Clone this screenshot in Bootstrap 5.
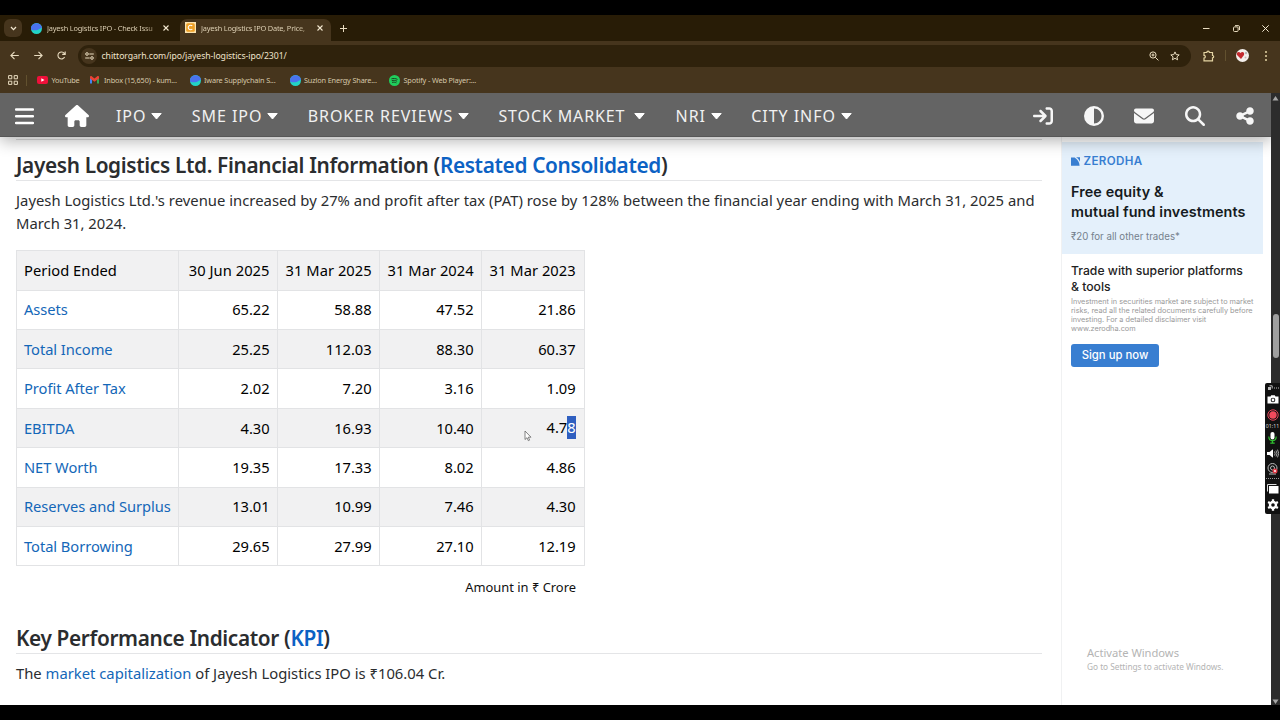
<!DOCTYPE html>
<html lang="en">
<head>
<meta charset="utf-8">
<meta name="viewport" content="width=device-width, initial-scale=1">
<title>Jayesh Logistics IPO Date, Price</title>
<link href="https://cdn.jsdelivr.net/npm/bootstrap@5.3.0/dist/css/bootstrap.min.css" rel="stylesheet">
<style>
body{width:1280px;height:720px;overflow:hidden;background:#000;font-family:"Noto Sans","Open Sans",sans-serif;font-size:14.8px;line-height:22.8px;color:#2b2d2f;padding:15px 0}
svg{display:block;flex:none}
.app-window{height:690px;overflow:hidden}
/* browser chrome */
.chrome{background:#46351d;color:#e9dcc0;font-size:7.4px;line-height:12px;letter-spacing:-.19px}
.tabstrip{height:26px;background:#281c06}
.tab-search{width:18px;height:18px;background:#46351d;border-radius:6px;margin-left:4px}
.tab-item{height:22px;width:154px;margin-left:4px;padding:0 11px 0 5px}
.tab-item.current{background:#46351d;width:151px;margin-left:0;align-self:flex-end;border-radius:7px 7px 0 0;padding-right:8px;padding-bottom:5px}
.tab-title{flex:1;white-space:nowrap;margin-left:5px;background:linear-gradient(90deg,#e9dcc0 82%,#6b5a3c 98%);-webkit-background-clip:text;background-clip:text;color:transparent}
.toolbar{height:26px;padding-top:3px;padding-left:10px}
.nav-arrows{gap:14.5px}
.omnibox{width:1113px;height:22px;border-radius:11px;background:#2f220c;margin-left:12px}
.site-chip{width:16px;height:16px;border-radius:8px;background:#46351d;margin-left:3px}
.url{font-size:8.7px;letter-spacing:-.08px;color:#efe3cc;margin-left:4.500px}
.omni-tools{gap:11px;padding-right:11px}
.win-tools{gap:22.5px;padding-right:11px}
.bar-split{width:1px;height:11px;background:#62512f;margin:0 10px}
.bookmarks{height:26px;color:#d6c8aa;font-size:7.3px;letter-spacing:-.14px;white-space:nowrap;padding-left:8px}
.bm{flex:none;padding-left:3.500px;width:89px}
.fav{width:11px;height:11px}
/* site header */
.page{width:1271px;height:612px;overflow:hidden;background:#fff;position:relative}
.site-nav{height:44px;padding-top:2px;background:#646464;box-shadow:0 4px 16px rgba(0,0,0,.3);position:relative;z-index:2;border-bottom:1px solid #575757}
.menu{font-size:16px;letter-spacing:.95px;gap:29.3px;margin:2px 0 0 27px}
.menu-link,.menu-link:hover{gap:5px;color:#f1f1f1;text-decoration:none}
.tools-grid{display:grid;grid-template-columns:repeat(5,50.5px);justify-items:center;align-items:center;margin-right:.5px}
/* article */
.article{width:1042px;flex:none;padding-left:16px}
.article a{color:#1467b8;text-decoration:none}
.section-end{height:1px;background:#dcdcdc;margin-top:2px}
.sec-title{font-size:20.8px;line-height:30px;letter-spacing:-.35px;font-weight:600;color:#2b2d2f;border-bottom:1px solid #e4e5e7;margin:0}
.article .sec-title a{color:#0c62c4}
.lede{white-space:nowrap;margin:8px 0 15.5px}
.wide-line{letter-spacing:.025px}
.fin{width:568px;table-layout:fixed;margin:0;font-size:14.7px;letter-spacing:-.05px;--bs-table-color:#000;border-color:#e2e3e5}
.fin td{height:39.43px;padding:0 7.5px;vertical-align:middle;text-align:right;white-space:nowrap}
.fin td:first-child{text-align:left;padding-left:7px}
.fin td:last-child{padding-right:8.5px}
.fin tr:nth-child(odd) td{background:#f1f1f2}
.fin tr:first-child td{letter-spacing:.05px}
.picked{background:#2f5fc0;color:#fff;display:inline-block;line-height:23px}
.unit{width:568px;padding-right:8px;font-size:12.9px;color:#111;margin-top:9.5px}
/* sidebar */
.side{width:210px;height:568px;margin-left:19px;border-left:1px solid #f0f1f2;font-family:Inter,sans-serif}
.ad-hero{width:201px;height:112px;background:#e4f0fb;margin-top:5px;padding:12px 0 0 9px;color:#151a20}
.ad-brand{color:#387ed1;font-size:11.6px;line-height:14px;font-weight:600;letter-spacing:.35px;gap:3.5px}
.ad-lead{font-size:14.4px;line-height:20.4px;font-weight:600;letter-spacing:.1px;margin-top:14px;white-space:nowrap}
.ad-note{font-size:9.7px;line-height:12px;color:#75818d;margin-top:8px}
.ad-body{padding:9px 0 0 9px;color:#222}
.ad-sub{font-size:12.2px;line-height:16px;font-weight:500}
.ad-fine{font-size:7.3px;line-height:8.9px;color:#999;margin:3px 0 10px}
.ad-btn,.ad-btn:hover{width:88px;height:23px;border-radius:3px;background:#387ed1;color:#fff;font-size:11.3px;font-weight:500;line-height:21px}
.watermark{left:1087px;top:552px;color:#b4b4b4}
.wm-big{font-size:11.2px;line-height:16px;letter-spacing:-.03px}.wm-small{font-size:8.3px;line-height:12px;letter-spacing:-.03px}
.pointer{left:524px;top:337px}
.scroll-rail{width:9px;background:#2c2c2c;padding:3px 0 1px}
.thumb{width:6px;height:44px;border-radius:3px;background:#9f9f9f;left:2px;top:221px}
.recorder{left:1265px;top:290px;width:15px;height:131px;background:#111;border-radius:2px 0 0 2px;z-index:5;padding-top:2px;color:#ddd;font:5.2px/6px "Noto Sans",sans-serif}
.rec-line{width:13px;border-top:1px dotted #999}
</style>
</head>
<body>
<svg width="0" height="0" class="position-absolute">
 <symbol id="swirl" viewBox="0 0 12 12"><circle cx="6" cy="6" r="6" fill="#22d3c5"/><path d="M0 7A6 6 0 1 1 12 5.400C9.500 5 8.500 8 5.500 8 3.500 8 1.500 7.600 0 7z" fill="#4a72ee"/></symbol>
 <symbol id="caret" viewBox="0 0 11 7"><path d="M.8.5h9.400L5.500 6z" fill="#fff" stroke="#fff" stroke-linejoin="round"/></symbol>
 <symbol id="cross" viewBox="0 0 6 6"><path d="M.5.5l5 5m0-5l-5 5" stroke="#f3e8d0" stroke-width="1.100"/></symbol>
</svg>
<div class="app-window d-flex flex-column">
 <header class="chrome">
  <div class="tabstrip d-flex align-items-center">
   <div class="tab-search d-flex align-items-center justify-content-center"><svg width="7" height="5" viewBox="0 0 7 5"><path d="M1 1l2.500 2.600L6 1" fill="none" stroke="#f3e8d0" stroke-width="1.300"/></svg></div>
   <div class="tab-item d-flex align-items-center"><svg class="fav"><use href="#swirl"/></svg><span class="tab-title">Jayesh Logistics IPO - Check Issu</span><svg width="6" height="6"><use href="#cross"/></svg></div>
   <div class="tab-item current d-flex align-items-center"><svg class="fav" viewBox="0 0 11 11"><rect width="11" height="11" fill="#fbe3b0"/><rect x="1.200" y="1.200" width="8.600" height="8.600" rx="1.500" fill="#eea025"/><path d="M7.300 4A2.300 2.300 0 1 0 7.300 7" fill="none" stroke="#fff" stroke-width="1.100"/></svg><span class="tab-title">Jayesh Logistics IPO Date, Price,</span><svg width="6" height="6"><use href="#cross"/></svg></div>
   <svg style="margin-left:9px" width="7" height="7" viewBox="0 0 7 7"><path d="M3.500 0v7M0 3.500h7" stroke="#e9dcc0"/></svg>
   <div class="win-tools ms-auto d-flex align-items-center"><svg width="7" height="7" viewBox="0 0 7 7"><path d="M0 3.500h6.500" stroke="#e9dcc0"/></svg><svg width="7" height="7" viewBox="0 0 7 7" fill="none" stroke="#e9dcc0"><rect x=".5" y="1.900" width="4.600" height="4.600" rx="1"/><path d="M2 .6h3.200a1.300 1.300 0 0 1 1.300 1.300V5"/></svg><svg width="7" height="7" viewBox="0 0 7 7"><path d="M.3.3l6.400 6.400m0-6.400L.3 6.700" stroke="#f3e8d0"/></svg></div>
  </div>
  <div class="toolbar d-flex align-items-center">
   <div class="nav-arrows d-flex">
    <svg width="9" height="9" viewBox="0 0 9 9" fill="none" stroke="#e9dcc0" stroke-width="1.100"><path d="M8.800 4.500H1M4.500.9L.9 4.500l3.600 3.600"/></svg>
    <svg width="9" height="9" viewBox="0 0 9 9" fill="none" stroke="#e9dcc0" stroke-width="1.100"><path d="M.2 4.500H8M4.500.9l3.600 3.600-3.600 3.600"/></svg>
    <svg width="9" height="9" viewBox="0 0 9 9" fill="none" stroke="#e9dcc0" stroke-width="1.100"><path d="M7.600 6A3.500 3.500 0 1 1 7.300 2.400L8 3.200M8.200.4v3H5.200"/></svg>
   </div>
   <div class="omnibox d-flex align-items-center"><div class="site-chip d-flex align-items-center justify-content-center"><svg width="9" height="8" viewBox="0 0 9 8" fill="none" stroke="#e9dcc0"><circle cx="2" cy="2" r="1.300"/><path d="M4.300 2H8.800M.2 6h4.500"/><circle cx="7" cy="6" r="1.300"/></svg></div><span class="url">chittorgarh.com/ipo/jayesh-logistics-ipo/2301/</span>
    <div class="omni-tools ms-auto d-flex align-items-center"><svg width="10" height="10" viewBox="0 0 10 10" fill="none" stroke="#e9dcc0"><circle cx="4" cy="4" r="3.100"/><path d="M6.300 6.300L9.400 9.400M2.500 4h3M4 2.500v3"/></svg><svg width="10" height="10" viewBox="0 0 10 10" fill="none" stroke="#e9dcc0"><path d="M5 .9l1.200 2.700 3 .3-2.300 2 .7 2.900L5 7.300 2.400 8.800l.7-2.900L.8 3.900l3-.3z"/></svg></div></div>
   <svg style="margin-left:12px" width="12" height="12" viewBox="0 0 12 12" fill="none" stroke="#e5d5a4" stroke-width="1.200"><path d="M1 2.500h2.800a1.300 1.300 0 0 1 2.600 0H9.500v3a1.200 1.200 0 0 1 0 2.400v3H1V8a1.300 1.300 0 0 0 0-2.700z"/></svg>
   <div class="bar-split"></div>
   <svg width="13" height="13" viewBox="0 0 13 13"><circle cx="6.500" cy="6.500" r="6.500" fill="#f4efec"/><path d="M5 10L1 6C0 3 3 2 4.500 4 6 2 9 3 8 6z" fill="#c32a2f"/><circle cx="10" cy="4" r="1.200" fill="#bbb"/><circle cx="9.500" cy="8.500" r="1" fill="#c9b8b8"/></svg>
   <svg style="margin-left:16px" width="2" height="10" viewBox="0 0 2 10" fill="#e5d5a4"><circle cx="1" cy="1" r="1"/><circle cx="1" cy="5" r="1"/><circle cx="1" cy="9" r="1"/></svg>
  </div>
  <div class="bookmarks d-flex align-items-center">
   <svg width="10" height="10" viewBox="0 0 10 10" fill="none" stroke="#e9dcc0"><path d="M.6.6h3.200v3.200H.6zM6.200.6h3.200v3.200H6.200zM.6 6.200h3.200v3.200H.6zM6.200 6.200h3.200v3.200H6.200z"/></svg>
   <div class="bar-split ms-2"></div>
   <svg width="11" height="8" viewBox="0 0 11 8"><rect width="11" height="8" rx="2" fill="#f0103a"/><path d="M4.300 2.200v3.600L7.500 4z" fill="#fff"/></svg><span class="bm" style="width:42px;letter-spacing:-.25px">YouTube</span>
   <svg width="9" height="8" viewBox="0 0 9 8"><path d="M0 1v6.500h2V3.500z" fill="#4285f4"/><path d="M9 1v6.500H7V3.500z" fill="#34a853"/><path d="M0 1.200C0 0 1.200-.2 2 .5L4.500 2.500 7 .5C7.800-.2 9 0 9 1.200v1.300L4.500 5.800 0 2.500z" fill="#ea4335"/></svg><span class="bm" style="width:90.500px;padding-left:5px">Inbox (15,650) - kum...</span>
   <svg class="fav"><use href="#swirl"/></svg><span class="bm">Iware Supplychain S...</span>
   <svg class="fav"><use href="#swirl"/></svg><span class="bm" style="width:88.500px">Suzlon Energy Share...</span>
   <svg class="fav" viewBox="0 0 12 12"><circle cx="6" cy="6" r="6" fill="#1fce5c"/><path d="M2.600 4.200c2.300-.7 4.600-.5 6.700.6M3 6.200c2-.6 4-.4 5.800.6M3.300 8.100c1.700-.5 3.300-.3 4.800.5" fill="none" stroke="#1c3a1c"/></svg><span class="bm">Spotify - Web Player:...</span>
  </div>
 </header>
 <div class="d-flex flex-grow-1 position-relative">
  <div class="page">
   <nav class="site-nav d-flex align-items-center">
    <svg style="margin-left:15px" width="19" height="18" viewBox="0 0 19 18"><path d="M1 2.500h17M1 9.200h17M1 16h17" stroke="#fff" stroke-width="2.400" stroke-linecap="round"/></svg>
    <svg style="margin-left:31px" width="24" height="22" viewBox="0 0 576 512" preserveAspectRatio="none" fill="#fff"><path d="M575.8 255.500c0 18-15 32.100-32 32.100h-32l.7 160.200c0 2.700-.2 5.400-.5 8.100V472c0 22.100-17.900 40-40 40H392c-22.100 0-40-17.900-40-40V384c0-17.700-14.300-32-32-32H256c-17.700 0-32 14.300-32 32v88c0 22.100-17.900 40-40 40H104c-22.100 0-40-17.900-40-40V287.600H32c-18 0-32-14-32-32.100c0-9 3-17 10-24L266.400 8c7-7 15-8 22-8s15 2 21 7L564.800 231.500c8 7 12 15 11 24z"/></svg>
    <div class="menu d-flex align-items-center">
     <a href="#" class="menu-link d-flex align-items-center">IPO<svg width="11" height="7"><use href="#caret"/></svg></a>
     <a href="#" class="menu-link d-flex align-items-center">SME IPO<svg width="11" height="7"><use href="#caret"/></svg></a>
     <a href="#" class="menu-link d-flex align-items-center">BROKER REVIEWS<svg width="11" height="7"><use href="#caret"/></svg></a>
     <a href="#" class="menu-link d-flex align-items-center me-1" style="letter-spacing:.87px">STOCK MARKET<svg class="ms-1" width="11" height="7" style="margin-right:-3px"><use href="#caret"/></svg></a>
     <a href="#" class="menu-link d-flex align-items-center">NRI<svg width="11" height="7"><use href="#caret"/></svg></a>
     <a href="#" class="menu-link d-flex align-items-center">CITY INFO<svg width="11" height="7"><use href="#caret"/></svg></a>
    </div>
    <div class="tools-grid ms-auto">
     <svg width="20" height="20" viewBox="0 0 512 512" fill="#f6f6f6"><path d="M352 96l64 0c17.700 0 32 14.300 32 32l0 256c0 17.700-14.300 32-32 32l-64 0c-17.700 0-32 14.300-32 32s14.300 32 32 32l64 0c53 0 96-43 96-96l0-256c0-53-43-96-96-96l-64 0c-17.700 0-32 14.300-32 32s14.300 32 32 32zm-9.400 182.600c12.500-12.500 12.500-32.800 0-45.300l-128-128c-12.500-12.500-32.800-12.500-45.300 0s-12.500 32.800 0 45.300L242.700 224 32 224c-17.700 0-32 14.300-32 32s14.300 32 32 32l210.700 0-73.400 73.400c-12.500 12.500-12.500 32.800 0 45.300s32.800 12.500 45.300 0l128-128z"/></svg>
     <svg width="20" height="20" viewBox="0 0 512 512" fill="#f6f6f6"><path d="M448 256c0-106-86-192-192-192V448c106 0 192-86 192-192zM0 256a256 256 0 1 1 512 0A256 256 0 1 1 0 256z"/></svg>
     <svg width="20" height="20" viewBox="0 0 512 512" fill="#f6f6f6"><path d="M48 64C21.500 64 0 85.500 0 112c0 15.100 7.100 29.300 19.200 38.400L236.800 313.600c11.400 8.500 27 8.500 38.400 0L492.800 150.400c12.100-9.100 19.200-23.300 19.200-38.400c0-26.500-21.500-48-48-48H48zM0 176V384c0 35.300 28.700 64 64 64H448c35.300 0 64-28.700 64-64V176L294.400 339.200c-22.800 17.100-54 17.100-76.800 0L0 176z"/></svg>
     <svg width="20" height="20" viewBox="0 0 512 512" fill="#f6f6f6"><path d="M416 208c0 45.900-14.900 88.300-40 122.700L502.600 457.400c12.500 12.500 12.500 32.800 0 45.300s-32.800 12.500-45.300 0L330.700 376c-34.400 25.200-76.800 40-122.700 40C93.100 416 0 322.900 0 208S93.100 0 208 0S416 93.100 416 208zM208 352a144 144 0 1 0 0-288 144 144 0 1 0 0 288z"/></svg>
     <svg width="18" height="20" viewBox="0 0 448 512" fill="#f6f6f6"><path d="M352 224c53 0 96-43 96-96s-43-96-96-96s-96 43-96 96c0 4 .2 8 .7 11.900l-94.100 47C145.400 170.200 121.900 160 96 160c-53 0-96 43-96 96s43 96 96 96c25.900 0 49.400-10.200 66.600-26.900l94.100 47c-.5 3.900-.7 7.800-.7 11.900c0 53 43 96 96 96s96-43 96-96s-43-96-96-96c-25.900 0-49.400 10.200-66.600 26.900l-94.100-47c.5-3.900 .7-7.800 .7-11.900s-.2-8-.7-11.900l94.100-47C302.600 213.800 326.100 224 352 224z"/></svg>
    </div>
   </nav>
   <div class="d-flex">
    <main class="article">
     <div class="section-end"></div>
     <h2 class="sec-title" style="margin-top:10px">Jayesh Logistics Ltd. Financial Information (<a href="#">Restated Consolidated</a>)</h2>
     <p class="lede"><span class="wide-line">Jayesh Logistics Ltd.'s revenue increased by 27% and profit after tax (PAT) rose by 128% between the financial year ending with March 31, 2025 and</span><br>March 31, 2024.</p>
     <table class="table table-bordered fin">
      <colgroup><col style="width:162px"><col style="width:99px"><col style="width:102px"><col style="width:102px"><col style="width:103px"></colgroup>
      <tbody>
      <tr><td>Period Ended</td><td>30 Jun 2025</td><td>31 Mar 2025</td><td>31 Mar 2024</td><td>31 Mar 2023</td></tr>
      <tr><td><a href="#">Assets</a></td><td>65.22</td><td>58.88</td><td>47.52</td><td>21.86</td></tr>
      <tr><td><a href="#">Total Income</a></td><td>25.25</td><td>112.03</td><td>88.30</td><td>60.37</td></tr>
      <tr><td><a href="#">Profit After Tax</a></td><td>2.02</td><td>7.20</td><td>3.16</td><td>1.09</td></tr>
      <tr><td><a href="#">EBITDA</a></td><td>4.30</td><td>16.93</td><td>10.40</td><td>4.7<span class="picked">8</span></td></tr>
      <tr><td><a href="#">NET Worth</a></td><td>19.35</td><td>17.33</td><td>8.02</td><td>4.86</td></tr>
      <tr><td><a href="#">Reserves and Surplus</a></td><td>13.01</td><td>10.99</td><td>7.46</td><td>4.30</td></tr>
      <tr><td><a href="#">Total Borrowing</a></td><td>29.65</td><td>27.99</td><td>27.10</td><td>12.19</td></tr>
      </tbody>
     </table>
     <div class="unit text-end">Amount in ₹ Crore</div>
     <h2 class="sec-title" style="margin-top:24px">Key Performance Indicator (<a href="#">KPI</a>)</h2>
     <p class="lede">The <a href="#">market capitalization</a> of Jayesh Logistics IPO is ₹106.04 Cr.</p>
    </main>
    <aside class="side">
     <div class="ad-hero">
      <div class="ad-brand d-flex align-items-center"><svg width="9" height="9" viewBox="0 0 9 9" fill="#387ed1"><path d="M0 .6h3.600C6.300 2.200 8.400 5 8.600 8.800H0z"/><path d="M5 .3h4v4.500C8.300 3 6.900 1.300 5 .3z"/></svg>ZERODHA</div>
      <div class="ad-lead">Free equity &amp;<br>mutual fund investments</div>
      <div class="ad-note">₹20 for all other trades*</div>
     </div>
     <div class="ad-body">
      <div class="ad-sub">Trade with superior platforms<br>&amp; tools</div>
      <div class="ad-fine">Investment in securities market are subject to market<br>risks, read all the related documents carefully before<br>investing. For a detailed disclaimer visit<br>www.zerodha.com</div>
      <button class="btn ad-btn p-0 border-0 d-block">Sign up now</button>
     </div>
    </aside>
   </div>
   <svg class="pointer position-absolute" width="8" height="12" viewBox="0 0 8 12"><path d="M1 1v8.500l2-1.800 1.300 3 1.300-.6-1.300-2.900H7z" fill="#fff" stroke="#666" stroke-width=".8"/></svg>
   <div class="watermark position-absolute"><div class="wm-big">Activate Windows</div><div class="wm-small">Go to Settings to activate Windows.</div></div>
  </div>
  <div class="scroll-rail position-relative d-flex flex-column align-items-center justify-content-between">
   <svg width="7" height="5" viewBox="0 0 7 5"><path d="M3.500 0L6.500 4.500h-6z" fill="#a5a5a5"/></svg>
   <div class="thumb position-absolute"></div>
   <svg width="7" height="5" viewBox="0 0 7 5"><path d="M3.500 5L6.500.5h-6z" fill="#a5a5a5"/></svg>
  </div>
  <div class="recorder position-absolute d-flex flex-column align-items-center">
   <svg width="13" height="6" viewBox="0 0 13 6"><rect x="2" y="2" width="3" height="3" fill="#bbb"/><path d="M3.500.8h2.700v2.700" fill="none" stroke="#bbb"/><path d="M8 3h1M10 3h1M12 3h1" stroke="#bbb"/></svg>
   <svg style="margin-top:4px" width="12" height="9" viewBox="0 0 12 9"><path d="M.5 1.500h3L4.200.3h3.600l.7 1.200h3v7H.5z" fill="#fff"/><circle cx="6" cy="5" r="2.300" fill="#111"/><circle cx="6" cy="5" r="1.400" fill="#fff"/></svg>
   <svg style="margin-top:5px" width="12" height="12" viewBox="0 0 12 12"><circle cx="6" cy="6" r="5.200" fill="none" stroke="#e8475c" stroke-width="1"/><circle cx="6" cy="6" r="3.700" fill="#f04a5c"/></svg>
   <span style="margin-top:2px">01:11</span>
   <svg style="margin-top:3px" width="9" height="12" viewBox="0 0 9 12"><rect x="2.500" y="0" width="4" height="7.500" rx="2" fill="#fff"/><path d="M.8 4.500c0 5.500 7.400 5.500 7.400 0M4.500 8.800v2M2.300 11.200h4.400" fill="none" stroke="#30c030" stroke-width="1.200"/></svg>
   <svg style="margin-top:5px" width="12" height="9" viewBox="0 0 12 9"><path d="M0 3h2.500L6 .3v8.400L2.500 6H0z" fill="#fff"/><path d="M7.500 2.500q1.300 2 0 4M9 1.500q2 3 0 6M10.500.6q2.500 3.900 0 7.800" fill="none" stroke="#ccc" stroke-width=".8"/></svg>
   <svg style="margin-top:5px" width="11" height="12" viewBox="0 0 11 12"><circle cx="5.500" cy="5" r="4.500" fill="none" stroke="#bbb"/><circle cx="5.500" cy="5" r="2" fill="none" stroke="#bbb"/><path d="M2 11h7" stroke="#bbb"/><circle cx="8" cy="8" r="2.500" fill="#e03a45"/><path d="M7 7l2 2m0-2L7 9" stroke="#fff" stroke-width=".7"/></svg>
   <div class="rec-line" style="margin-top:3px"></div>
   <svg style="margin-top:5px" width="12" height="10" viewBox="0 0 12 10"><path d="M.5 7.500V.5H9.500" fill="none" stroke="#ddd"/><rect x="2" y="2" width="9.500" height="7.500" fill="#fff"/></svg>
   <svg style="margin-top:5px" width="12" height="12" viewBox="0 0 12 12"><circle cx="6" cy="6" r="3" fill="none" stroke="#fff" stroke-width="2.400"/><path d="M6 .3v2M6 9.700v2M1.100 3.100l1.700 1M9.200 7.900l1.700 1M1.100 8.900l1.700-1M9.200 4.100l1.700-1" stroke="#fff" stroke-width="2.300"/></svg>
  </div>
 </div>
</div>
<script src="https://cdn.jsdelivr.net/npm/bootstrap@5.3.0/dist/js/bootstrap.bundle.min.js"></script>
</body>
</html>
